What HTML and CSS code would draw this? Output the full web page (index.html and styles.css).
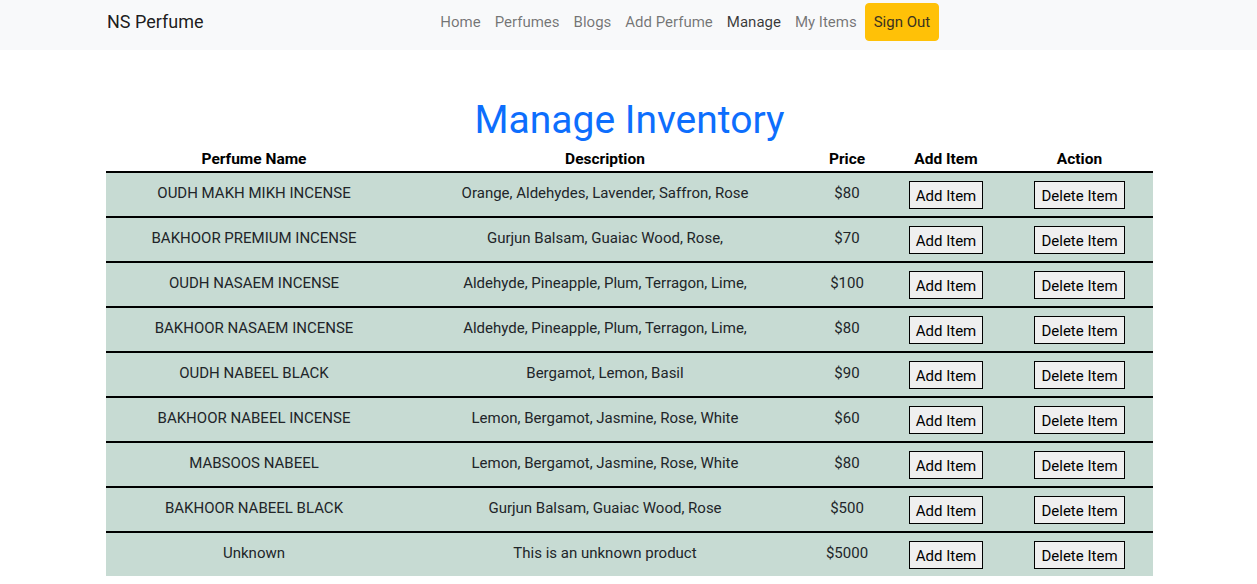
FILE: index.html
```html
<!DOCTYPE html>
<html lang="en">
<head>
<meta charset="utf-8">
<title>NS Perfume - Manage Inventory</title>
<link rel="stylesheet" href="styles.css">
</head>
<body>
<nav class="navbar">
  <div class="nav-inner">
    <a class="brand" href="#">NS Perfume</a>
    <ul class="nav">
      <li><a class="nav-link" href="#">Home</a></li>
      <li><a class="nav-link" href="#">Perfumes</a></li>
      <li><a class="nav-link" href="#">Blogs</a></li>
      <li><a class="nav-link" href="#">Add Perfume</a></li>
      <li><a class="nav-link active" href="#">Manage</a></li>
      <li><a class="nav-link" href="#">My Items</a></li>
      <li><button class="btn-signout" type="button">Sign Out</button></li>
    </ul>
  </div>
</nav>

<main class="main">
  <h1 class="title">Manage Inventory</h1>
  <table class="inv">
    <colgroup>
      <col class="c-name">
      <col class="c-desc">
      <col class="c-price">
      <col class="c-add">
      <col class="c-action">
    </colgroup>
    <thead>
      <tr>
        <th>Perfume Name</th>
        <th>Description</th>
        <th>Price</th>
        <th>Add Item</th>
        <th>Action</th>
      </tr>
    </thead>
    <tbody>
      <tr><td>OUDH MAKH MIKH INCENSE</td><td>Orange, Aldehydes, Lavender, Saffron, Rose</td><td>$80</td><td><button class="btn" type="button">Add Item</button></td><td><button class="btn" type="button">Delete Item</button></td></tr>
      <tr><td>BAKHOOR PREMIUM INCENSE</td><td>Gurjun Balsam, Guaiac Wood, Rose,</td><td>$70</td><td><button class="btn" type="button">Add Item</button></td><td><button class="btn" type="button">Delete Item</button></td></tr>
      <tr><td>OUDH NASAEM INCENSE</td><td>Aldehyde, Pineapple, Plum, Terragon, Lime,</td><td>$100</td><td><button class="btn" type="button">Add Item</button></td><td><button class="btn" type="button">Delete Item</button></td></tr>
      <tr><td>BAKHOOR NASAEM INCENSE</td><td>Aldehyde, Pineapple, Plum, Terragon, Lime,</td><td>$80</td><td><button class="btn" type="button">Add Item</button></td><td><button class="btn" type="button">Delete Item</button></td></tr>
      <tr><td>OUDH NABEEL BLACK</td><td>Bergamot, Lemon, Basil</td><td>$90</td><td><button class="btn" type="button">Add Item</button></td><td><button class="btn" type="button">Delete Item</button></td></tr>
      <tr><td>BAKHOOR NABEEL INCENSE</td><td>Lemon, Bergamot, Jasmine, Rose, White</td><td>$60</td><td><button class="btn" type="button">Add Item</button></td><td><button class="btn" type="button">Delete Item</button></td></tr>
      <tr><td>MABSOOS NABEEL</td><td>Lemon, Bergamot, Jasmine, Rose, White</td><td>$80</td><td><button class="btn" type="button">Add Item</button></td><td><button class="btn" type="button">Delete Item</button></td></tr>
      <tr><td>BAKHOOR NABEEL BLACK</td><td>Gurjun Balsam, Guaiac Wood, Rose</td><td>$500</td><td><button class="btn" type="button">Add Item</button></td><td><button class="btn" type="button">Delete Item</button></td></tr>
      <tr><td>Unknown</td><td>This is an unknown product</td><td>$5000</td><td><button class="btn" type="button">Add Item</button></td><td><button class="btn" type="button">Delete Item</button></td></tr>
    </tbody>
  </table>
</main>
</body>
</html>
```
FILE: styles.css
```css
* { box-sizing: border-box; }

body {
  margin: 0;
  font-family: Roboto, "Liberation Sans", sans-serif;
  font-size: 15px;
  line-height: 24px;
  color: #212529;
  background: #fff;
}

/* ---------- navbar ---------- */
.navbar {
  background: #f8f9fa;
  height: 50px;
  padding: 3px 0 0 2px;
}

.nav-inner {
  width: 1047px;
  margin: 0 auto;
  display: flex;
  align-items: center;
  height: 38px;
}

.brand {
  font-size: 18px;
  color: rgba(0, 0, 0, 0.9);
  text-decoration: none;
  margin-right: 16px;
  padding-left: 1px;
}

.nav {
  list-style: none;
  margin: 0 auto;
  padding: 0;
  display: flex;
  align-items: center;
}

.nav-link {
  display: block;
  padding: 7px 7px;
  color: rgba(0, 0, 0, 0.55);
  text-decoration: none;
}

.nav-link.active {
  color: rgba(0, 0, 0, 0.78);
}

.btn-signout {
  font: inherit;
  line-height: 24px;
  color: #3a3320;
  background: #ffc107;
  border: 1px solid #ffc107;
  border-radius: 4px;
  padding: 6px 8px;
  height: 38px;
  margin-left: 1px;
  cursor: pointer;
}

/* ---------- content ---------- */
.main {
  padding-left: 2px;
}

.title {
  margin: 49px 0 0;
  text-align: center;
  font-size: 39px;
  font-weight: 400;
  line-height: 43px;
  color: #0d6efd;
}

.inv {
  width: 1047px;
  margin: 0 auto;
  border-collapse: collapse;
  table-layout: fixed;
}

.c-name { width: 296px; }
.c-desc { width: 406px; }
.c-price { width: 78px; }
.c-add { width: 120px; }
.c-action { width: 147px; }

.inv th {
  font-size: 15.5px;
  font-weight: 700;
  color: #000;
  text-align: center;
  padding: 5px 8px 0;
  line-height: 24px;
  border-bottom: 2px solid #000;
}

.inv tbody tr {
  background: #c7dbd3;
  border-top: 2px solid #000;
}

.inv td {
  text-align: center;
  vertical-align: top;
  padding: 8px 8px 7px;
  line-height: 24px;
  color: #212529;
}

.btn {
  font: inherit;
  line-height: 24px;
  height: 28px;
  padding: 2px 6px 0;
  color: #000;
  background: #efefef;
  border: 1px solid #000;
  border-radius: 0;
  cursor: pointer;
}
```
